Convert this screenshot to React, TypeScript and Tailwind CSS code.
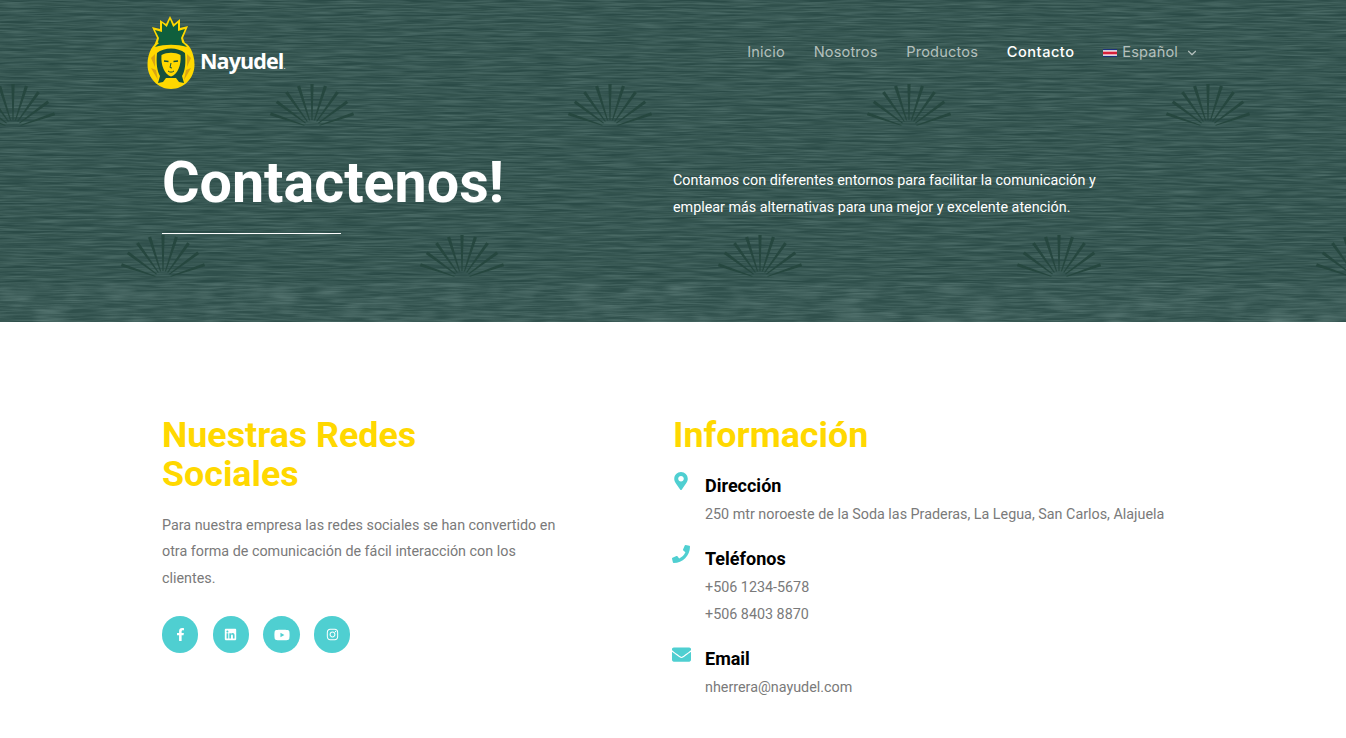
import React from "react";
import { FaMapMarkerAlt, FaPhone, FaEnvelope, FaFacebookF, FaLinkedin, FaYoutube, FaInstagram } from "react-icons/fa";
import { FiChevronDown } from "react-icons/fi";

const angles = [-71, -53.25, -35.5, -17.75, 0, 17.75, 35.5, 53.25, 71];
const row1 = [13, 312, 610, 909, 1208];
const row2 = [163, 462, 760, 1059, 1358];

function Sun({ x, y }: { x: number; y: number }) {
  return (
    <g transform={`translate(${x} ${y})`}>
      {angles.map((a) => (
        <polygon key={a} transform={`rotate(${a})`} points="-0.5,-8 0.5,-8 1.6,-44 -1.6,-44" fill="#26473f" />
      ))}
    </g>
  );
}

function HeroBackground() {
  return (
    <svg className="absolute inset-0 h-full w-full" viewBox="0 0 1346 322" preserveAspectRatio="none" aria-hidden="true">
      <defs>
        <pattern id="lines" width="1346" height="7" patternUnits="userSpaceOnUse">
          <rect width="1346" height="2" y="0" fill="#264642" opacity="0.5" />
          <rect width="1346" height="2" y="3" fill="#385854" opacity="0.35" />
        </pattern>
        <filter id="grain" x="0" y="0" width="100%" height="100%">
          <feTurbulence type="fractalNoise" baseFrequency="0.03 0.6" numOctaves="2" seed="7" />
          <feColorMatrix type="matrix" values="0 0 0 0 0.17  0 0 0 0 0.29  0 0 0 0 0.27  0.8 0 0 0 -0.28" />
        </filter>
        <filter id="blot" x="0" y="0" width="100%" height="100%">
          <feTurbulence type="fractalNoise" baseFrequency="0.03 0.08" numOctaves="2" seed="3" />
          <feColorMatrix type="matrix" values="0 0 0 0 0.22  0 0 0 0 0.35  0 0 0 0 0.33  0.6 0 0 0 -0.25" />
        </filter>
      </defs>
      <rect width="1346" height="322" fill="#30504c" />
      <rect width="1346" height="283" fill="url(#lines)" />
      <rect width="1346" height="322" filter="url(#grain)" />
      <rect y="283" width="1346" height="39" filter="url(#blot)" />
      {row1.map((x) => <Sun key={x} x={x} y={128} />)}
      {row2.map((x) => <Sun key={x} x={x} y={279} />)}
    </svg>
  );
}

function Logo() {
  return (
    <div className="flex h-[73px] items-end">
      <svg width="48" height="73" viewBox="0 0 48 73" aria-hidden="true">
        <polygon points="23,0 27,8 33,3 33,12 41,10 36,22 39,30 7,30 10,22 5,11 13,13 13,4 19,8" fill="#ffd800" />
        <polygon points="23,3.5 26.2,11 31,7 31,15 38,13 34,22 36,30 10,30 12,22 8,14 15,16 15,7 19.8,11" fill="#0f5f3d" />
        <path d="M0.5 48.5 C0.5 35 8 25 12 27 L36 27 C40 25 47.5 35 47.5 48.5 C47.5 62 37 73 24 73 C11 73 0.5 62 0.5 48.5 Z" fill="#ffd800" />
        <path d="M8 31 C12 26 17 24 24 24 C31 24 36 26 40 31 C30 28 18 28 8 31 Z" fill="#0f5f3d" />
        <path d="M10 37 C17 31 31 31 38 37 C39 47 38 55 35 60 L37 67 L32 66 L29 62 L19 62 L16 66 L11 67 L13 60 C10 55 9 47 10 37 Z" fill="#14503c" />
        <path d="M14.5 39 C20 36 28 36 33.5 39 C34.5 49 30.5 58.5 24 60.5 C17.5 58.5 13.5 49 14.5 39 Z" fill="#ffd800" />
        <path d="M17 45 L21.5 45.5 M26.5 45.5 L31 45" stroke="#14503c" strokeWidth="1.5" fill="none" />
        <path d="M24 47 L23 51.5 L25 52 M21 55 C23 56.5 25 56.5 27 55" stroke="#14503c" strokeWidth="1" fill="none" />
        <path d="M4 42 L8 38 L8 51 Z M44 42 L40 38 L40 51 Z M4 52 L9 54 L11 64 Z M44 52 L39 54 L37 64 Z" fill="#d9a514" />
      </svg>
      <span className="mb-[9px] ml-[5px] text-[21.5px] font-bold leading-[28px] tracking-[-0.9px] text-white [font-family:'Open_Sans',sans-serif]">
        Nayudel<span className="text-[8px] font-normal">.</span>
      </span>
    </div>
  );
}

function NavLink({ children, active }: { children: React.ReactNode; active?: boolean }) {
  return <a className={active ? "font-medium tracking-[0.5px] text-white" : "text-[#b4c0bd]"}>{children}</a>;
}

function Flag() {
  return (
    <svg width="14" height="8" viewBox="0 0 14 8" aria-hidden="true">
      <rect width="14" height="8" fill="#fff" />
      <rect width="14" height="1.2" fill="#1c2f7c" />
      <rect y="6.8" width="14" height="1.2" fill="#1c2f7c" />
      <rect y="2.6" width="14" height="2.8" fill="#d8203a" />
    </svg>
  );
}

function Social({ children }: { children: React.ReactNode }) {
  return <a className="flex h-[37px] w-[36.4px] items-center justify-center rounded-full bg-[#4fcfd1] text-[13px] text-white">{children}</a>;
}

function InfoItem({ icon, title, lines }: { icon: React.ReactNode; title: string; lines: string[] }) {
  return (
    <div className="flex">
      <div className="-ml-px w-[33px] shrink-0 text-[#4fcfd1]">{icon}</div>
      <div>
        <h3 className="mb-[2px] text-[18px] font-bold leading-[27px] text-black">{title}</h3>
        {lines.map((l) => (
          <p key={l} className="text-[14.33px] leading-[27px] text-[#7a7a7a]">{l}</p>
        ))}
      </div>
    </div>
  );
}

export default function App() {
  return (
    <div className="min-h-[738px] overflow-hidden bg-white [font-family:Roboto,sans-serif]">
      <header className="relative h-[322px] overflow-hidden">
        <HeroBackground />
        <div className="relative px-[147px] pt-[16px]">
          <div className="flex h-[73px] items-center justify-between">
            <Logo />
            <nav className="flex items-center gap-[28.8px] pt-[1px] text-[14.6px] tracking-[0.15px] [font-family:Inter,sans-serif]">
              <NavLink>Inicio</NavLink>
              <NavLink>Nosotros</NavLink>
              <NavLink>Productos</NavLink>
              <NavLink active>Contacto</NavLink>
              <a className="flex items-center text-[#b4c0bd]">
                <Flag />
                <span className="ml-[5px]">Español</span>
                <FiChevronDown className="ml-[7px] text-[14px]" />
              </a>
            </nav>
          </div>
        </div>
        <div className="relative mx-auto mt-[61px] grid w-[1022px] grid-cols-2">
          <div>
            <h1 className="text-[57.4px] font-bold leading-[66px] text-white">Contactenos!</h1>
            <div className="mt-[17px] h-px w-[179px] bg-white" />
          </div>
          <p className="pt-[17px] text-[14.33px] leading-[27px] text-white">
            Contamos con diferentes entornos para facilitar la comunicación y<br />
            emplear más alternativas para una mejor y excelente atención.
          </p>
        </div>
      </header>
      <main className="mx-auto grid w-[1022px] grid-cols-2 pt-[94px]">
        <section>
          <h2 className="text-[35.8px] font-bold leading-[39px] text-[#ffd800]">Nuestras Redes<br />Sociales</h2>
          <p className="mt-[18px] w-[400px] text-[14.33px] leading-[26.4px] text-[#7a7a7a]">
            Para nuestra empresa las redes sociales se han convertido en otra forma de comunicación de fácil interacción con los clientes.
          </p>
          <div className="mt-[24.8px] flex gap-[14.27px]">
            <Social><FaFacebookF /></Social>
            <Social><FaLinkedin /></Social>
            <Social><FaYoutube className="text-[16px]" /></Social>
            <Social><FaInstagram /></Social>
          </div>
        </section>
        <section>
          <h2 className="text-[35.8px] font-bold leading-[39px] text-[#ffd800]">Información</h2>
          <div className="mt-[17px] flex flex-col gap-[17px]">
            <InfoItem icon={<FaMapMarkerAlt className="text-[18px]" />} title="Dirección" lines={["250 mtr noroeste de la Soda las Praderas, La Legua, San Carlos, Alajuela"]} />
            <InfoItem icon={<FaPhone className="text-[18px]" />} title="Teléfonos" lines={["+506 1234-5678", "+506 8403 8870"]} />
            <InfoItem icon={<FaEnvelope className="text-[19px]" />} title="Email" lines={["nherrera@nayudel.com"]} />
          </div>
        </section>
      </main>
    </div>
  );
}
